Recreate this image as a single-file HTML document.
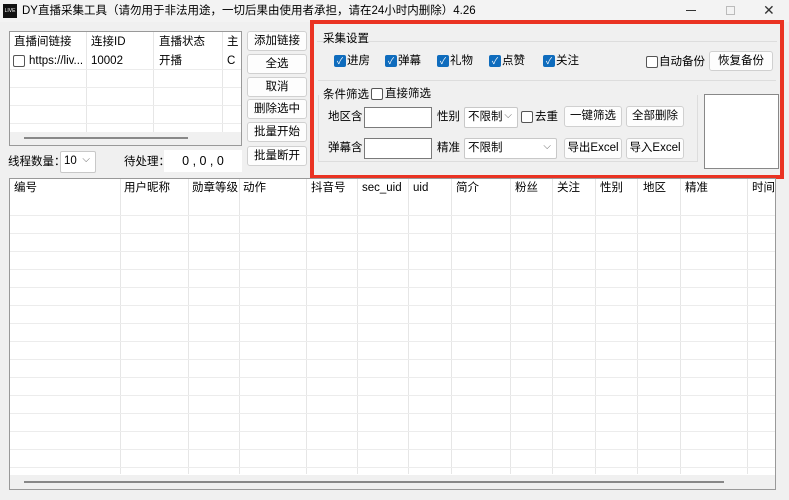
<!DOCTYPE html>
<html><head><meta charset="utf-8"><style>
*{box-sizing:border-box;margin:0;padding:0}
body{width:789px;height:500px;background:#f0f0f0;font-family:"Liberation Sans","Noto Sans CJK SC",sans-serif;font-size:11.5px;line-height:16px;color:#000;position:relative;overflow:hidden}
.a{position:absolute}
.btn{position:absolute;background:#fdfdfd;border:1px solid #d0d0d0;border-radius:3px;text-align:center;font-size:11.5px;line-height:18px}
.cb{position:absolute;width:12px;height:12px;border-radius:2px;background:#0f6cbd;color:#fff;font-size:9px;line-height:12px;text-align:center}
.cbo{position:absolute;width:12px;height:12px;border-radius:2px;border:1px solid #555;background:#fff}
.inp{position:absolute;background:#fff;border:1px solid #7a7a7a}
.sel{position:absolute;background:#fff;border:1px solid #c8c8c8;border-radius:2px;padding-left:3px;line-height:19px;font-size:11.5px}
.sel:after{content:"⌵";position:absolute;right:5px;top:-2px;color:#666;font-size:10px}
.vl{position:absolute;width:1px;background:#e6e6e6}
.hl{position:absolute;height:1px;background:#ececec}
.h{position:absolute;font-size:11.5px;line-height:16px}
</style></head><body>
<div class="a" style="left:0;top:0;width:789px;height:22px;background:#f3f3f3"></div>
<div class="a" style="left:3px;top:4px;width:14px;height:14px;background:#111;color:#fff;font-size:5px;line-height:14px;text-align:center">LIVE</div>
<div class="a" style="left:22px;top:3px;font-size:11.5px">DY直播采集工具（请勿用于非法用途，一切后果由使用者承担，请在24小时内删除）4.26</div>
<div class="a" style="left:686px;top:10px;width:10px;height:1px;background:#333"></div>
<div class="a" style="left:726px;top:6px;width:9px;height:9px;border:1px solid #bbb"></div>
<div class="a" style="left:763px;top:2px;font-size:14px;color:#333">✕</div>

<!-- top list -->
<div class="a" style="left:9px;top:31px;width:233px;height:115px;background:#fff;border:1px solid #999"></div>
<div class="vl" style="left:86px;top:32px;height:100px"></div>
<div class="vl" style="left:153px;top:32px;height:100px"></div>
<div class="vl" style="left:222px;top:32px;height:100px"></div>
<div class="hl" style="left:10px;top:69px;width:231px"></div>
<div class="hl" style="left:10px;top:87px;width:231px"></div>
<div class="hl" style="left:10px;top:105px;width:231px"></div>
<div class="hl" style="left:10px;top:123px;width:231px"></div>
<div class="h" style="left:14px;top:34px">直播间链接</div>
<div class="h" style="left:91px;top:34px">连接ID</div>
<div class="h" style="left:159px;top:34px">直播状态</div>
<div class="h" style="left:227px;top:34px">主</div>
<div class="cbo" style="left:13px;top:55px"></div>
<div class="h" style="left:29px;top:53px">https://liv...</div>
<div class="h" style="left:91px;top:53px">10002</div>
<div class="h" style="left:159px;top:53px">开播</div>
<div class="h" style="left:227px;top:53px">C</div>
<div class="a" style="left:10px;top:132px;width:231px;height:13px;background:#f0f0f0"></div>
<div class="a" style="left:24px;top:137px;width:164px;height:2px;background:#888"></div>

<div class="btn" style="left:247px;top:31px;width:60px;height:20px">添加链接</div>
<div class="btn" style="left:247px;top:54px;width:60px;height:20px">全选</div>
<div class="btn" style="left:247px;top:77px;width:60px;height:20px">取消</div>
<div class="btn" style="left:247px;top:99px;width:60px;height:20px">删除选中</div>
<div class="btn" style="left:247px;top:122px;width:60px;height:20px">批量开始</div>
<div class="btn" style="left:247px;top:146px;width:60px;height:20px">批量断开</div>

<div class="a" style="left:8px;top:154px">线程数量：</div>
<div class="sel" style="left:60px;top:151px;width:36px;height:22px">10</div>
<div class="a" style="left:124px;top:154px">待处理：</div>
<div class="a" style="left:164px;top:150px;width:78px;height:22px;background:#fff;text-align:center;line-height:22px;font-size:12.5px">0 , 0 , 0</div>

<!-- red box -->
<div class="a" style="left:310px;top:20px;width:474px;height:159px;border:4px solid #ea3323"></div>
<div class="a" style="left:317px;top:41px;width:460px;height:1px;background:#ddd"></div>
<div class="a" style="left:323px;top:31px;font-size:11.5px">采集设置</div>
<div class="a" style="left:318px;top:80px;width:458px;height:1px;background:#ddd"></div>
<div class="cb" style="left:334px;top:55px">✓</div><div class="h" style="left:347px;top:53px">进房</div>
<div class="cb" style="left:385px;top:55px">✓</div><div class="h" style="left:398px;top:53px">弹幕</div>
<div class="cb" style="left:437px;top:55px">✓</div><div class="h" style="left:450px;top:53px">礼物</div>
<div class="cb" style="left:489px;top:55px">✓</div><div class="h" style="left:502px;top:53px">点赞</div>
<div class="cb" style="left:543px;top:55px">✓</div><div class="h" style="left:556px;top:53px">关注</div>
<div class="cbo" style="left:646px;top:56px"></div><div class="h" style="left:659px;top:54px">自动备份</div>
<div class="btn" style="left:709px;top:51px;width:64px;height:20px">恢复备份</div>

<div class="a" style="left:318px;top:95px;width:380px;height:67px;border:1px solid #ddd;border-top:none"></div>
<div class="a" style="left:323px;top:87px;font-size:11.5px">条件筛选</div>
<div class="cbo" style="left:371px;top:88px"></div><div class="h" style="left:385px;top:86px">直接筛选</div>
<div class="a" style="left:328px;top:109px">地区含</div>
<div class="inp" style="left:364px;top:107px;width:68px;height:21px"></div>
<div class="a" style="left:437px;top:109px">性别</div>
<div class="sel" style="left:464px;top:107px;width:54px;height:21px">不限制</div>
<div class="cbo" style="left:521px;top:111px"></div><div class="h" style="left:535px;top:109px">去重</div>
<div class="btn" style="left:564px;top:106px;width:58px;height:21px">一键筛选</div>
<div class="btn" style="left:626px;top:106px;width:58px;height:21px">全部删除</div>
<div class="a" style="left:328px;top:140px">弹幕含</div>
<div class="inp" style="left:364px;top:138px;width:68px;height:21px"></div>
<div class="a" style="left:437px;top:140px">精准</div>
<div class="sel" style="left:464px;top:138px;width:93px;height:21px">不限制</div>
<div class="btn" style="left:564px;top:138px;width:58px;height:21px">导出Excel</div>
<div class="btn" style="left:626px;top:138px;width:58px;height:21px">导入Excel</div>
<div class="a" style="left:704px;top:94px;width:75px;height:75px;background:#fff;border:1px solid #888"></div>

<!-- bottom table -->
<div class="a" style="left:9px;top:178px;width:767px;height:312px;background:#fff;border:1px solid #999"></div>
<div class="vl" style="left:120px;top:179px;height:295px"></div>
<div class="vl" style="left:188px;top:179px;height:295px"></div>
<div class="vl" style="left:239px;top:179px;height:295px"></div>
<div class="vl" style="left:306px;top:179px;height:295px"></div>
<div class="vl" style="left:357px;top:179px;height:295px"></div>
<div class="vl" style="left:408px;top:179px;height:295px"></div>
<div class="vl" style="left:451px;top:179px;height:295px"></div>
<div class="vl" style="left:510px;top:179px;height:295px"></div>
<div class="vl" style="left:552px;top:179px;height:295px"></div>
<div class="vl" style="left:595px;top:179px;height:295px"></div>
<div class="vl" style="left:637px;top:179px;height:295px"></div>
<div class="vl" style="left:680px;top:179px;height:295px"></div>
<div class="vl" style="left:747px;top:179px;height:295px"></div>
<div class="h" style="left:14px;top:180px">编号</div>
<div class="h" style="left:124px;top:180px">用户昵称</div>
<div class="h" style="left:192px;top:180px">勋章等级</div>
<div class="h" style="left:243px;top:180px">动作</div>
<div class="h" style="left:311px;top:180px">抖音号</div>
<div class="h" style="left:362px;top:180px">sec_uid</div>
<div class="h" style="left:413px;top:180px">uid</div>
<div class="h" style="left:456px;top:180px">简介</div>
<div class="h" style="left:515px;top:180px">粉丝</div>
<div class="h" style="left:557px;top:180px">关注</div>
<div class="h" style="left:600px;top:180px">性别</div>
<div class="h" style="left:643px;top:180px">地区</div>
<div class="h" style="left:685px;top:180px">精准</div>
<div class="h" style="left:752px;top:180px">时间</div>
<div class="hl" style="left:10px;top:215px;width:765px"></div>
<div class="hl" style="left:10px;top:233px;width:765px"></div>
<div class="hl" style="left:10px;top:251px;width:765px"></div>
<div class="hl" style="left:10px;top:269px;width:765px"></div>
<div class="hl" style="left:10px;top:287px;width:765px"></div>
<div class="hl" style="left:10px;top:305px;width:765px"></div>
<div class="hl" style="left:10px;top:323px;width:765px"></div>
<div class="hl" style="left:10px;top:341px;width:765px"></div>
<div class="hl" style="left:10px;top:359px;width:765px"></div>
<div class="hl" style="left:10px;top:377px;width:765px"></div>
<div class="hl" style="left:10px;top:395px;width:765px"></div>
<div class="hl" style="left:10px;top:413px;width:765px"></div>
<div class="hl" style="left:10px;top:431px;width:765px"></div>
<div class="hl" style="left:10px;top:449px;width:765px"></div>
<div class="hl" style="left:10px;top:467px;width:765px"></div>
<div class="a" style="left:10px;top:475px;width:765px;height:14px;background:#f0f0f0"></div>
<div class="a" style="left:24px;top:481px;width:700px;height:2px;background:#888"></div>
</body></html>
